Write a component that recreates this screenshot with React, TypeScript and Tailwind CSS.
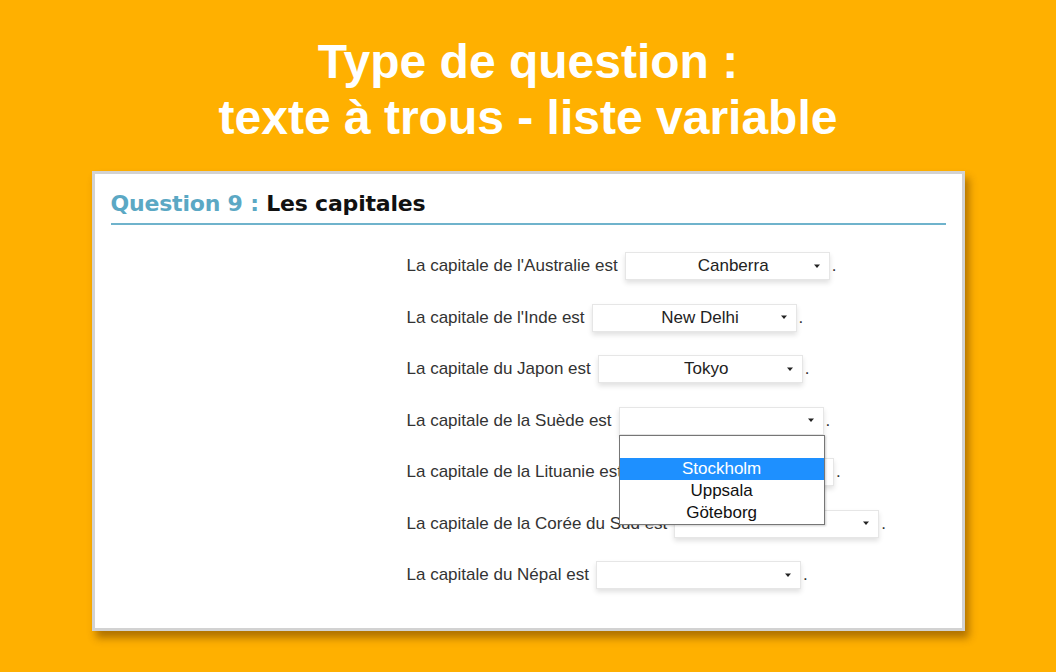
import { useState } from 'react';

interface Row {
  label: string;
  value: string;
  open?: boolean;
}

const ROWS: Row[] = [
  { label: "La capitale de l'Australie est", value: 'Canberra' },
  { label: "La capitale de l'Inde est", value: 'New Delhi' },
  { label: 'La capitale du Japon est', value: 'Tokyo' },
  { label: 'La capitale de la Suède est', value: '', open: true },
  { label: 'La capitale de la Lituanie est', value: '' },
  { label: 'La capitale de la Corée du Sud est', value: '' },
  { label: 'La capitale du Népal est', value: '' },
];

const OPTIONS = ['', 'Stockholm', 'Uppsala', 'Göteborg'];

function FakeSelect({ value, open }: { value: string; open?: boolean }) {
  const [hovered] = useState(1);
  return (
    <span className="relative inline-block align-middle">
      <span className="flex h-[28px] w-[205px] items-center border border-[#e6e6e6] bg-white pr-[8px] shadow-[0_3px_5px_rgba(0,0,0,0.12)]">
        <span className="flex-1 pl-[28px] text-center text-[17px] text-[#222]">{value}</span>
        <svg width="8" height="5" viewBox="0 0 8 5" className="shrink-0">
          <path d="M1 0.5h6L4 4z" fill="#222" />
        </svg>
      </span>
      {open && (
        <span className="absolute left-0 top-[28px] z-10 block w-[206px] border border-[#767676] bg-white shadow-[1px_1px_2px_rgba(0,0,0,0.2)]">
          {OPTIONS.map((opt, i) => (
            <span
              key={opt || 'empty'}
              className={`block h-[22px] text-center text-[17px] leading-[22px] ${
                i === hovered ? 'bg-[#1e90ff] text-white' : 'text-[#111]'
              }`}
            >
              {opt}
            </span>
          ))}
        </span>
      )}
    </span>
  );
}

export default function App() {
  return (
    <div className="flex h-[672px] w-[1056px] flex-col items-center bg-[#ffb000] font-['Liberation_Sans',Arial,sans-serif]">
      <h1 className="mt-[34px] text-center text-[48px] font-bold leading-[56px] text-white">
        Type de question :
        <br />
        texte à trous - liste variable
      </h1>

      <div className="mt-[25px] h-[460px] w-[873px] border-[3px] border-[#d2d2d2] bg-white px-[16px] shadow-[4px_7px_8px_rgba(80,40,0,0.45)]">
        <div className="mt-[13px] border-b-2 border-[#6fb3cc] pb-[3px] font-['DejaVu_Sans',sans-serif] text-[22px] font-bold tracking-[-0.2px]">
          <span className="text-[#5ba8c4]">Question 9 : </span>
          <span className="text-[#111]">Les capitales</span>
        </div>

        <div className="mt-[27px] flex flex-col gap-[23.5px] pl-[296px]">
          {ROWS.map((row) => (
            <div key={row.label} className="flex items-center text-[17px] text-[#333]">
              <span className="mr-[7px]">{row.label}</span>
              <FakeSelect value={row.value} open={row.open} />
              <span className="ml-[2px]">.</span>
            </div>
          ))}
        </div>
      </div>
    </div>
  );
}
